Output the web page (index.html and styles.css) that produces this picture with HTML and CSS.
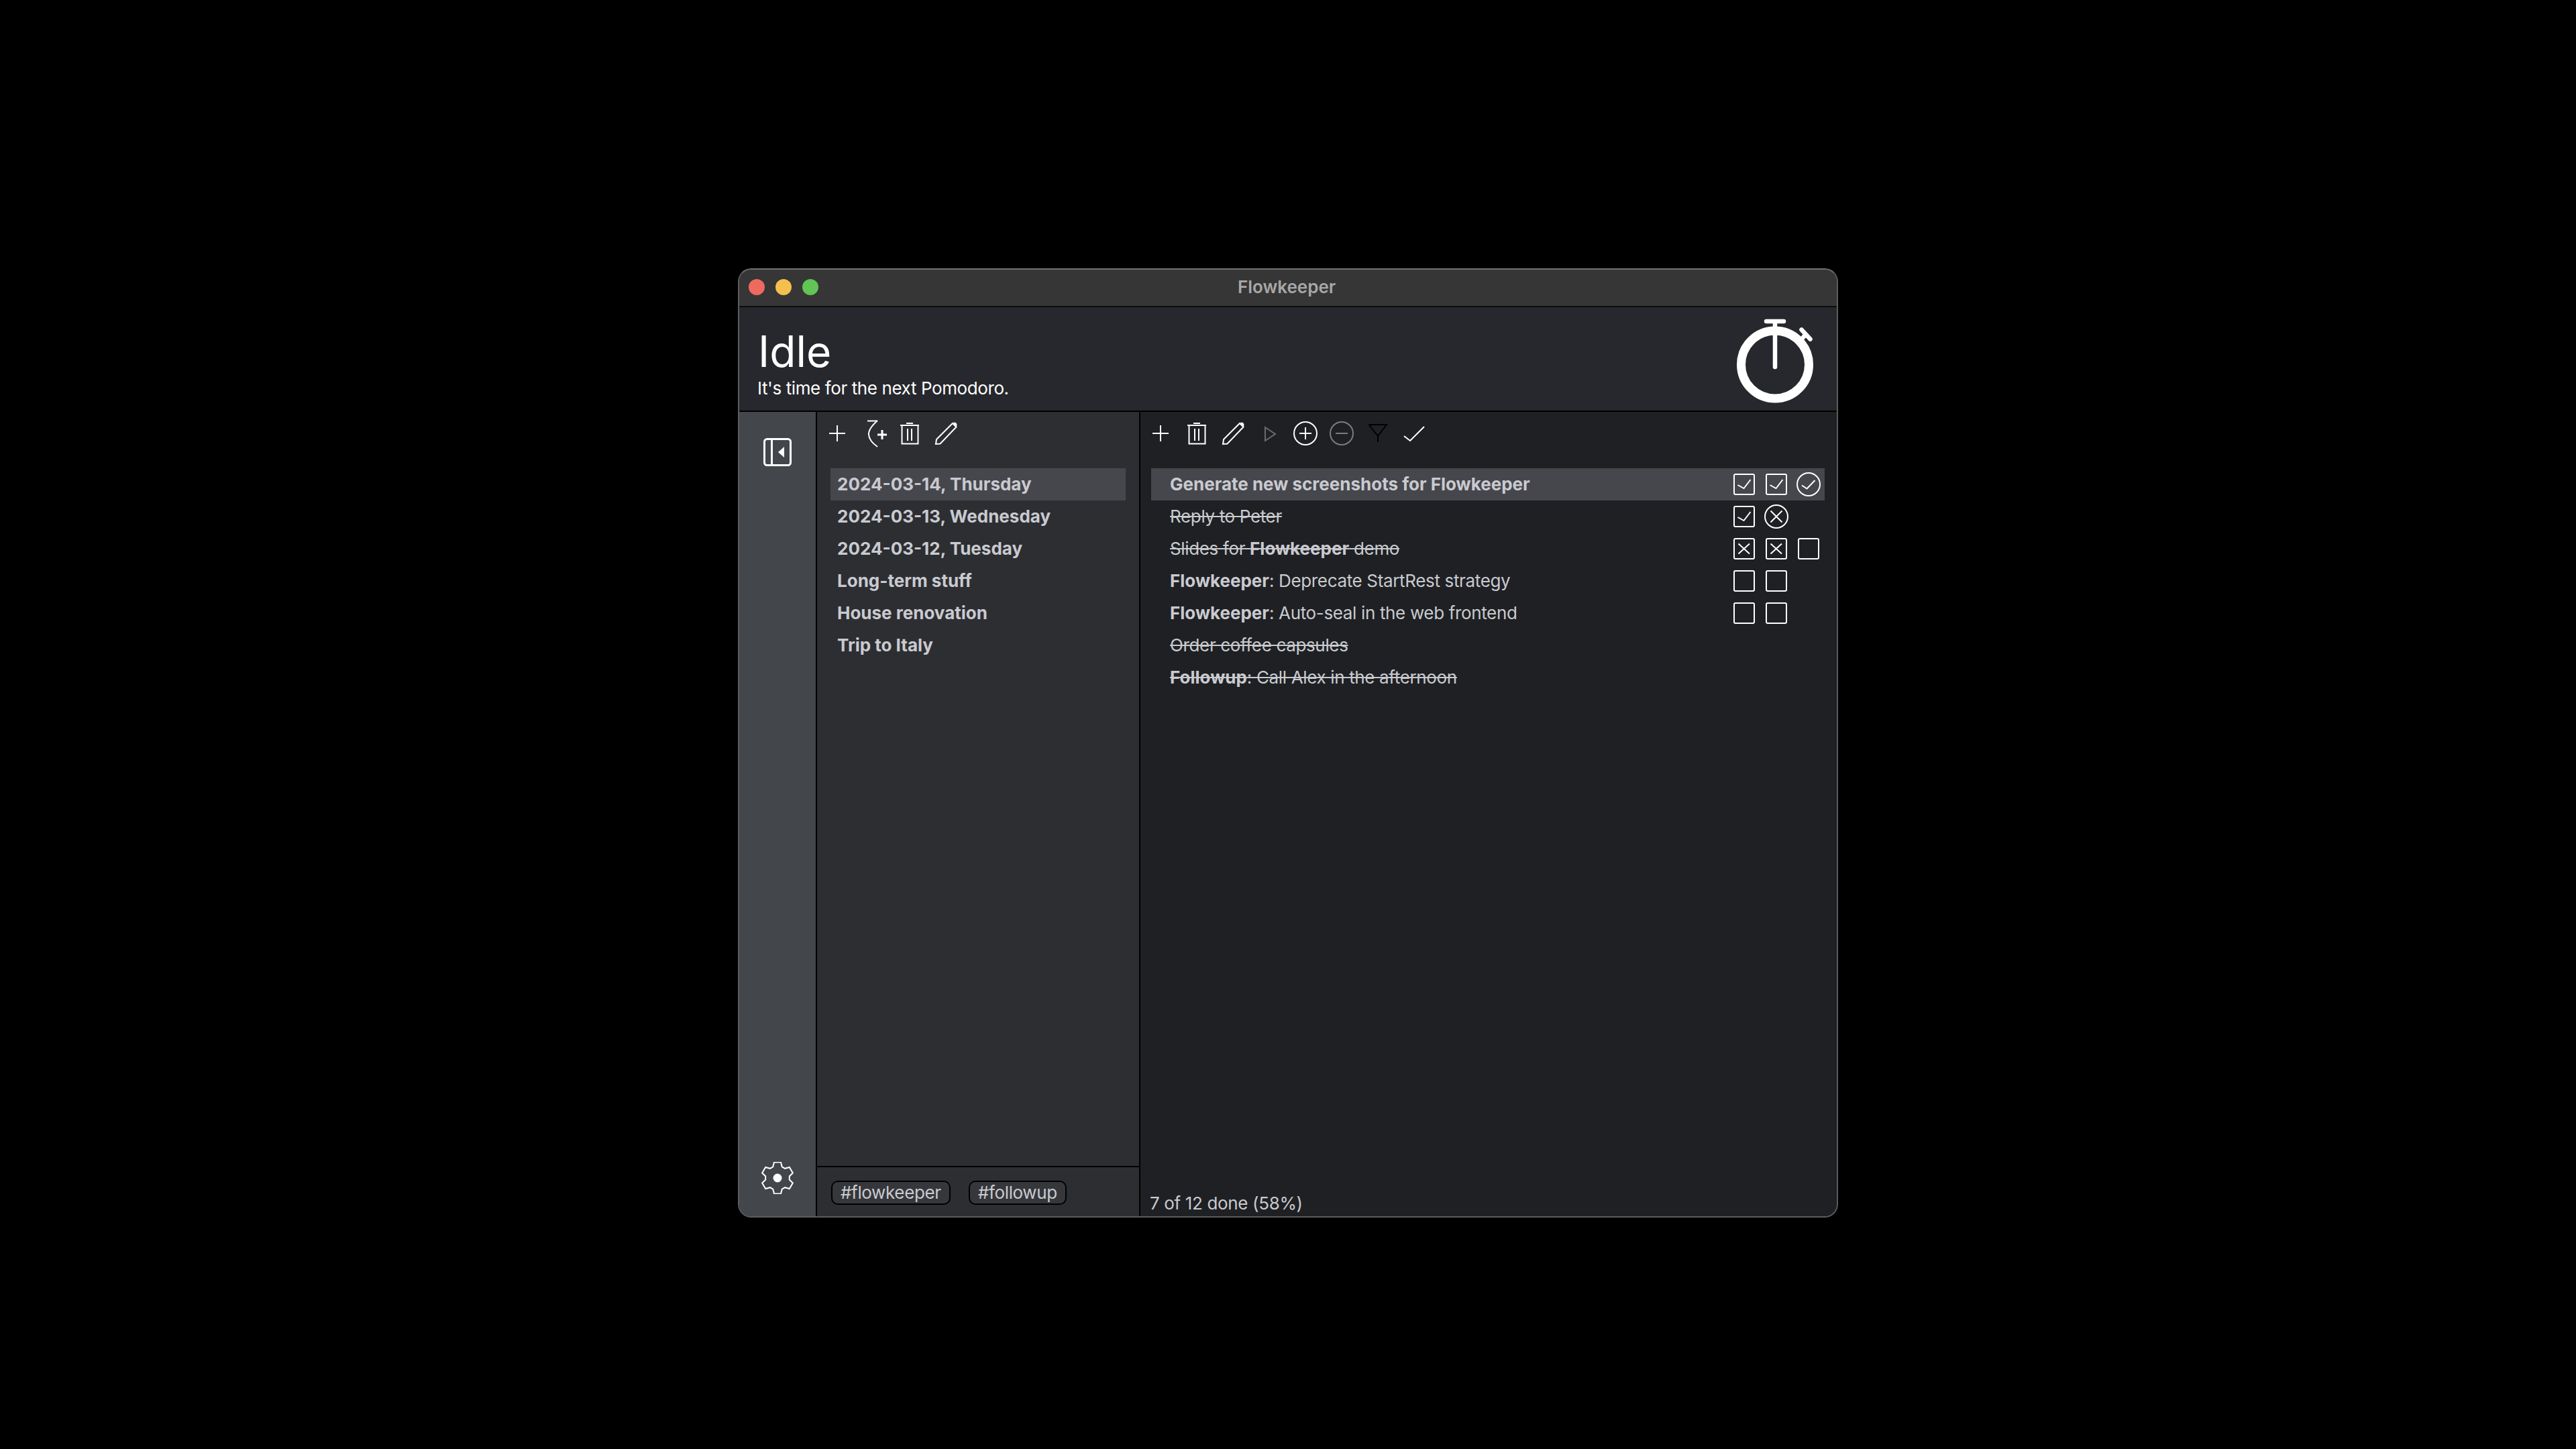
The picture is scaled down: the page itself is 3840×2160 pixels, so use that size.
FILE: index.html
```html
<!DOCTYPE html>
<html lang="en">
<head>
    <meta charset="UTF-8">
    <title>Flowkeeper</title>
    <link rel="stylesheet" href="styles.css">
</head>
<body>
    <svg class="defs" aria-hidden="true">
        <symbol id="i-plus" viewBox="0 0 54 64"><path d="M27 20V44M15 32H39"/></symbol>
        <symbol id="i-trash" viewBox="0 0 54 64"><path d="M22 17H32M13 20H41M15.5 20V47.5H39.5V20M24 25V43M30 25V43"/></symbol>
        <symbol id="i-pencil" viewBox="0 0 54 64"><path d="M12 48L13 41L37 17L42.5 22.5L18.5 47.5Z"/><path class="solid" d="M37 17L40 15.5Q43.5 16 43.5 20L42.5 22.5Z"/></symbol>
        <symbol id="i-box" viewBox="0 0 48 48"><rect x="9" y="9" width="30" height="30" rx="2"/></symbol>
        <symbol id="i-box-check" viewBox="0 0 48 48"><rect x="9" y="9" width="30" height="30" rx="2"/><path d="M14.5 25L23.5 30L33.5 17"/></symbol>
        <symbol id="i-box-x" viewBox="0 0 48 48"><rect x="9" y="9" width="30" height="30" rx="2"/><path d="M15.5 16.5L32 31.5M32 16.5L15.5 31.5"/></symbol>
        <symbol id="i-round-check" viewBox="0 0 48 48"><circle cx="24" cy="24" r="17"/><path d="M14 25.5L21.5 30.5L33.5 18"/></symbol>
        <symbol id="i-round-x" viewBox="0 0 48 48"><circle cx="24" cy="24" r="17"/><path d="M15.5 15.5L32.5 32.5M32.5 15.5L15.5 32.5"/></symbol>
    </svg>

    <div class="window">
        <div class="titlebar">
            <div class="lights">
                <span class="light light-red"></span>
                <span class="light light-yellow"></span>
                <span class="light light-green"></span>
            </div>
            <div class="title">Flowkeeper</div>
        </div>

        <header class="status-head">
            <div>
                <h1>Idle</h1>
                <p>It's time for the next Pomodoro.</p>
            </div>
            <svg class="stopwatch" viewBox="0 0 130 140">
                <circle cx="66" cy="73.5" r="50.5" class="ring"/>
                <path d="M53 9H79M66 9V77M105.5 21.5L118.5 35.5M112 28.5L105 36"/>
            </svg>
        </header>

        <div class="main">
            <aside class="sidebar">
                <svg class="side-icon" viewBox="0 0 48 48">
                    <rect x="4.5" y="4.5" width="39" height="39" rx="4"/>
                    <path d="M15.5 4.5V43.5"/>
                    <polygon class="solid" points="25,24 34,16 34,32"/>
                </svg>
                <svg class="side-icon gear" viewBox="0 0 48 48">
                    <path d="M17.26 7.31L19 .53H29L30.74 7.31L35.08 9.82L41.83 7.94L46.82 16.58L41.82 21.5V26.5L46.82 31.42L41.83 40.06L35.08 38.18L30.74 40.69L29 47.47H19L17.26 40.69L12.92 38.18L6.17 40.06L1.18 31.42L6.18 26.5V21.5L1.18 16.58L6.17 7.94L12.92 9.82Z"/>
                    <circle class="solid" cx="24" cy="24" r="6.5"/>
                </svg>
            </aside>

            <section class="backlogs">
                <div class="toolbar">
                    <svg class="tool"><use href="#i-plus"/></svg>
                    <svg class="tool" viewBox="0 0 54 64">
                        <path d="M18 13.5H33"/>
                        <path d="M33 13C24 21 19.5 28 20 34C20.5 41 26 47 33 52"/>
                        <path class="thick" d="M40 27V41M33 34H47"/>
                    </svg>
                    <svg class="tool"><use href="#i-trash"/></svg>
                    <svg class="tool"><use href="#i-pencil"/></svg>
                </div>
                <ul class="list">
                    <li class="row selected"><b>2024-03-14, Thursday</b></li>
                    <li class="row"><b>2024-03-13, Wednesday</b></li>
                    <li class="row"><b>2024-03-12, Tuesday</b></li>
                    <li class="row"><b>Long-term stuff</b></li>
                    <li class="row"><b>House renovation</b></li>
                    <li class="row"><b>Trip to Italy</b></li>
                </ul>
                <div class="tags">
                    <span class="tag">#flowkeeper</span>
                    <span class="tag">#followup</span>
                </div>
            </section>

            <section class="workitems">
                <div class="toolbar">
                    <svg class="tool"><use href="#i-plus"/></svg>
                    <svg class="tool"><use href="#i-trash"/></svg>
                    <svg class="tool"><use href="#i-pencil"/></svg>
                    <svg class="tool dim" viewBox="0 0 54 64"><polygon points="21,23 36,33 21,43"/></svg>
                    <svg class="tool" viewBox="0 0 54 64"><circle cx="27" cy="32" r="17"/><path d="M27 23V41M18 32H36"/></svg>
                    <svg class="tool faded" viewBox="0 0 54 64"><circle cx="27" cy="32" r="17"/><path d="M18 32H36"/></svg>
                    <svg class="tool black" viewBox="0 0 54 64"><path d="M13.5 19H40L27 36V45M27 36L13.5 19"/></svg>
                    <svg class="tool" viewBox="0 0 54 64"><path d="M12 36L21 43L42 22"/></svg>
                </div>
                <ul class="list items">
                    <li class="row selected">
                        <span class="item-title"><b>Generate new screenshots for Flowkeeper</b></span>
                        <span class="marks">
                            <svg class="mark"><use href="#i-box-check"/></svg>
                            <svg class="mark"><use href="#i-box-check"/></svg>
                            <svg class="mark"><use href="#i-round-check"/></svg>
                        </span>
                    </li>
                    <li class="row">
                        <span class="item-title done">Reply to Peter</span>
                        <span class="marks">
                            <svg class="mark"><use href="#i-box-check"/></svg>
                            <svg class="mark"><use href="#i-round-x"/></svg>
                        </span>
                    </li>
                    <li class="row">
                        <span class="item-title done">Slides for <b>Flowkeeper</b> demo</span>
                        <span class="marks">
                            <svg class="mark"><use href="#i-box-x"/></svg>
                            <svg class="mark"><use href="#i-box-x"/></svg>
                            <svg class="mark"><use href="#i-box"/></svg>
                        </span>
                    </li>
                    <li class="row">
                        <span class="item-title"><b>Flowkeeper</b>: Deprecate StartRest strategy</span>
                        <span class="marks">
                            <svg class="mark"><use href="#i-box"/></svg>
                            <svg class="mark"><use href="#i-box"/></svg>
                        </span>
                    </li>
                    <li class="row">
                        <span class="item-title"><b>Flowkeeper</b>: Auto-seal in the web frontend</span>
                        <span class="marks">
                            <svg class="mark"><use href="#i-box"/></svg>
                            <svg class="mark"><use href="#i-box"/></svg>
                        </span>
                    </li>
                    <li class="row">
                        <span class="item-title done">Order coffee capsules</span>
                    </li>
                    <li class="row">
                        <span class="item-title done"><b>Followup</b>: Call Alex in the afternoon</span>
                    </li>
                </ul>
                <div class="progress">7 of 12 done (58%)</div>
            </section>
        </div>
    </div>
</body>
</html>
```

FILE: styles.css
```css
body {
    margin: 0;
    background-color: #000;
    font-family: Inter, "Liberation Sans", sans-serif;
    font-size: 26px;
    letter-spacing: -0.35px;
    color: #c9cad0;
}
.defs {
    display: none;
}
svg {
    fill: none;
    stroke: #fff;
    stroke-width: 2;
}
svg .solid {
    fill: #fff;
    stroke: none;
}
.window {
    box-sizing: border-box;
    width: 1640px;
    height: 1415px;
    margin: 400px auto 0;
    border: 2px solid #5b5c5f;
    border-top-color: #737373;
    border-radius: 20px;
    overflow: hidden;
    display: flex;
    flex-direction: column;
    background-color: #1f2023;
}

/* title bar */
.titlebar {
    height: 54px;
    flex: none;
    display: flex;
    align-items: center;
    justify-content: center;
    position: relative;
    background-color: #363636;
    border-bottom: 2px solid #0c0c0c;
}
.lights {
    position: absolute;
    left: 14px;
    top: 14px;
    display: flex;
    gap: 16px;
}
.light {
    width: 24px;
    height: 24px;
    border-radius: 50%;
}
.light-red { background-color: #ee6a5f; }
.light-yellow { background-color: #f5bf4f; }
.light-green { background-color: #61c454; }
.title {
    font-weight: 600;
    letter-spacing: 0;
    color: #a8a8a8;
    padding: 0 4px 4px 0;
}

/* header */
.status-head {
    height: 154px;
    flex: none;
    display: flex;
    justify-content: space-between;
    background-color: #27282d;
    border-bottom: 2px solid #000;
}
.status-head > div {
    padding: 34px 0 0 27px;
}
.status-head h1 {
    margin: 0 0 0 1px;
    font-size: 64px;
    line-height: 64px;
    font-weight: 400;
    letter-spacing: 0;
    color: #fff;
}
.status-head p {
    margin: 7px 0 0;
    line-height: 32px;
    letter-spacing: -0.4px;
    color: #fff;
}
.stopwatch {
    width: 130px;
    height: 140px;
    margin: 12px 28px 0 0;
    stroke-width: 6.5;
    stroke-linecap: round;
}
.stopwatch .ring {
    stroke-width: 13;
}

/* main area */
.main {
    flex: 1;
    display: flex;
    min-height: 0;
}
.sidebar {
    width: 116px;
    flex: none;
    box-sizing: border-box;
    display: flex;
    flex-direction: column;
    justify-content: space-between;
    align-items: center;
    padding: 36px 0 33px;
    background-color: #43464b;
    border-right: 2px solid #000;
}
.side-icon {
    width: 48px;
    height: 48px;
    stroke-width: 3;
}
.gear {
    stroke-width: 2;
}
.backlogs {
    width: 482px;
    flex: none;
    box-sizing: border-box;
    display: flex;
    flex-direction: column;
    background-color: #2d2e32;
    border-right: 2px solid #000;
}
.workitems {
    flex: 1;
    display: flex;
    flex-direction: column;
    background-color: #1f2023;
}
.toolbar {
    height: 64px;
    flex: none;
    display: flex;
    padding-left: 3px;
    margin-bottom: 20px;
}
.tool {
    width: 54px;
    height: 64px;
}
.tool .thick {
    stroke-width: 3;
}
.tool.dim {
    stroke: #6b6c70;
}
.tool.faded {
    stroke: #7b7c7f;
}
.tool.black {
    stroke: #000;
}
.list {
    flex: 1;
    list-style: none;
    margin: 0 20px;
    padding: 0;
}
.row {
    height: 48px;
    line-height: 48px;
    padding-left: 10px;
}
.row.selected {
    background-color: #46474c;
}
.items {
    margin: 0 18px 0 16px;
}
.items .row {
    padding-left: 28px;
    display: flex;
    justify-content: space-between;
}
.item-title {
    white-space: nowrap;
}
b {
    font-weight: 700;
    letter-spacing: 0;
}
.done {
    text-decoration: line-through;
}
.marks {
    display: flex;
    width: 144px;
}
.mark {
    width: 48px;
    height: 48px;
}

/* footer bits */
.tags {
    height: 75px;
    flex: none;
    box-sizing: border-box;
    display: flex;
    align-items: flex-start;
    gap: 27px;
    padding: 20px 0 0 21px;
    border-top: 2px solid #000;
}
.tag {
    height: 36px;
    line-height: 31px;
    box-sizing: border-box;
    padding: 0 12px;
    background-color: #36373b;
    border: 2px solid #000;
    border-radius: 10px;
}
.progress {
    padding: 0 0 1px 14px;
    line-height: 36px;
}
```
